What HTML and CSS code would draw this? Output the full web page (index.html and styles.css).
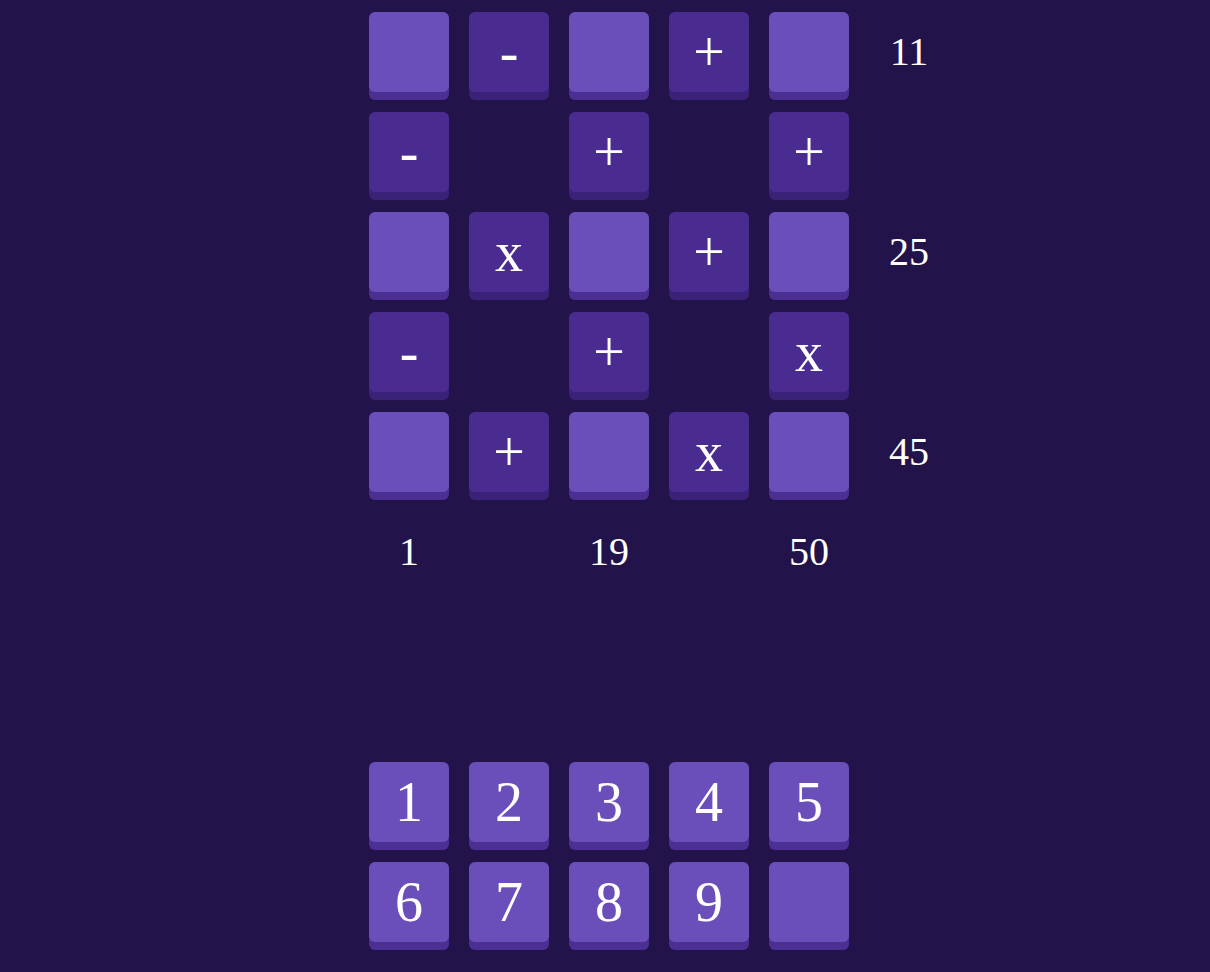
FILE: index.html
```html
<!DOCTYPE html>
<html>
<head>
<meta charset="utf-8">
<link rel="stylesheet" href="styles.css">
</head>
<body>
<main class="app">
  <div class="board">
    <div class="tile cell"></div>
    <div class="tile op">-</div>
    <div class="tile cell"></div>
    <div class="tile op">+</div>
    <div class="tile cell"></div>
    <div class="sum">11</div>

    <div class="tile op">-</div>
    <div class="blank"></div>
    <div class="tile op">+</div>
    <div class="blank"></div>
    <div class="tile op">+</div>
    <div class="blank"></div>

    <div class="tile cell"></div>
    <div class="tile op">x</div>
    <div class="tile cell"></div>
    <div class="tile op">+</div>
    <div class="tile cell"></div>
    <div class="sum">25</div>

    <div class="tile op">-</div>
    <div class="blank"></div>
    <div class="tile op">+</div>
    <div class="blank"></div>
    <div class="tile op">x</div>
    <div class="blank"></div>

    <div class="tile cell"></div>
    <div class="tile op">+</div>
    <div class="tile cell"></div>
    <div class="tile op">x</div>
    <div class="tile cell"></div>
    <div class="sum">45</div>

    <div class="sum">1</div>
    <div class="blank"></div>
    <div class="sum">19</div>
    <div class="blank"></div>
    <div class="sum">50</div>
    <div class="blank"></div>
  </div>

  <div class="pad">
    <div class="tile key">1</div>
    <div class="tile key">2</div>
    <div class="tile key">3</div>
    <div class="tile key">4</div>
    <div class="tile key">5</div>
    <div class="tile key">6</div>
    <div class="tile key">7</div>
    <div class="tile key">8</div>
    <div class="tile key">9</div>
    <div class="tile key"></div>
  </div>
</main>
</body>
</html>
```

FILE: styles.css
```css
html, body {
  margin: 0;
  padding: 0;
  background: #22144b;
  height: 100%;
}

body {
  font-family: "Liberation Serif", "Times New Roman", serif;
  color: #ffffff;
}

.app {
  padding: 12px 0 0 369px;
}

.board {
  display: grid;
  grid-template-columns: repeat(6, 80px);
  grid-auto-rows: 80px;
  column-gap: 20px;
  row-gap: 20px;
}

.pad {
  display: grid;
  grid-template-columns: repeat(5, 80px);
  grid-auto-rows: 80px;
  column-gap: 20px;
  row-gap: 20px;
  margin-top: 170px;
}

.tile {
  border-radius: 6px;
  display: flex;
  align-items: center;
  justify-content: center;
  font-size: 56px;
  line-height: 1;
}

.cell,
.key {
  background: #6a4fbb;
  box-shadow: 0 8px 0 #4c2f93;
}

.op {
  background: #4a2c90;
  box-shadow: 0 8px 0 #3b2279;
}

.sum {
  display: flex;
  align-items: center;
  justify-content: center;
  font-size: 40px;
  line-height: 1;
}
```
